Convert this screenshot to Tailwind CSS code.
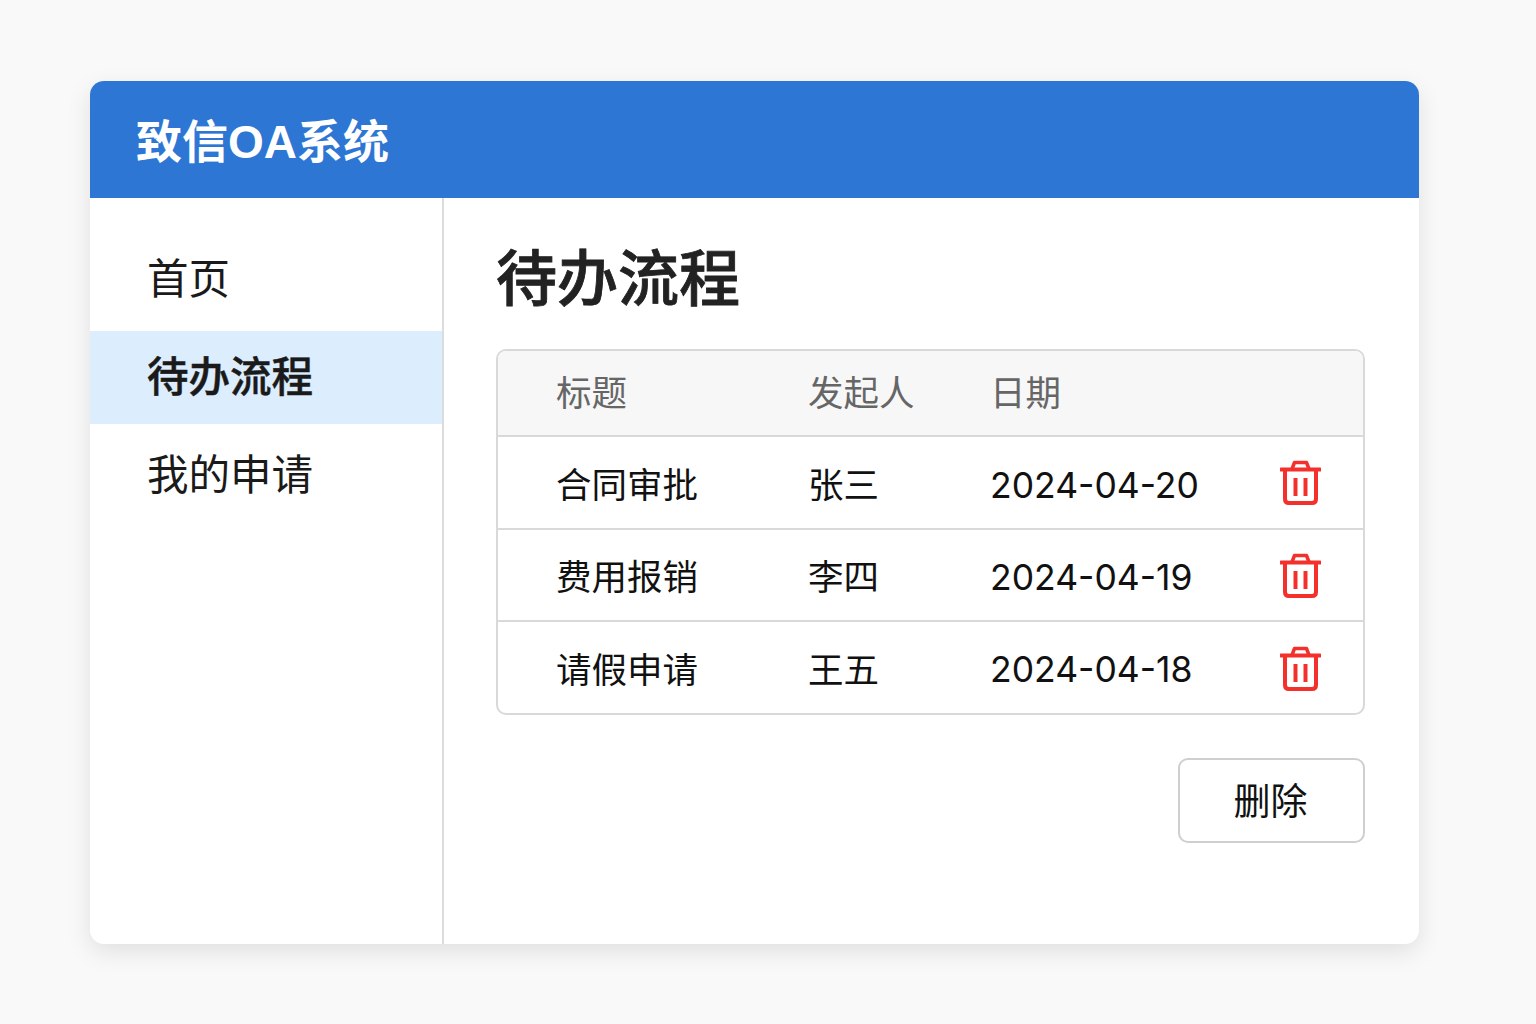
<!DOCTYPE html>
<html lang="zh-CN">
<head>
<meta charset="UTF-8" />
<title>致信OA系统</title>
<script src="https://cdn.jsdelivr.net/npm/@tailwindcss/browser@4"></script>
</head>
<body class="bg-[#f9f9fa] font-['Liberation_Sans','Noto_Sans_CJK_SC',sans-serif]">
<div class="h-[1024px] pl-[90px] pt-[81px]">
	<div class="w-[1329px] h-[863px] bg-white rounded-[14px] shadow-[0_8px_24px_rgba(0,0,0,0.10)] overflow-hidden flex flex-col">
		<header class="h-[117px] bg-[#2d76d4] flex items-center pl-[46px] pt-[4px] text-white text-[46px] leading-none font-bold">致信OA系统</header>
		<div class="flex flex-1">
			<nav class="w-[354px] border-r-2 border-[#dcdcdc] pt-[34px] text-[#1a1a1a] text-[41.500px] flex flex-col">
				<a class="h-[99px] pl-[57px] pb-[2px] flex items-center">首页</a>
				<a class="h-[93px] pl-[57px] pt-[2px] flex items-center bg-[#dcedfd] font-medium [-webkit-text-stroke:0.5px_#1a1a1a]">待办流程</a>
				<a class="h-[98px] pl-[57px] pt-[6px] flex items-center">我的申请</a>
			</nav>
			<main class="flex-1 pl-[52px] pr-[54px] pt-[40px]">
				<h1 class="text-[61px] leading-[84px] font-medium text-[#222222] [-webkit-text-stroke:0.8px_#222222]">待办流程</h1>
				<div class="mt-[27px] border-2 border-[#d9d9d9] rounded-[10px] overflow-hidden text-[35.500px] text-[#111111]">
					<div class="h-[86px] pt-[3px] bg-[#f7f7f7] border-b-2 border-[#d9d9d9] grid grid-cols-[252px_182px_290px_1fr] pl-[58px] items-center text-[#666666]">
						<span>标题</span><span>发起人</span><span>日期</span>
					</div>
					<div class="h-[92.5px] pt-[8px] border-b-2 border-[#d9d9d9] grid grid-cols-[252px_182px_290px_1fr] pl-[58px] items-center">
						<span>合同审批</span><span>张三</span><span class="font-['Inter'] text-[35.500px] -mt-[2px]">2024-04-20</span>
						<svg class="w-[41px] h-[45px] -mt-[7px]" viewBox="0 0 41 45" fill="none" stroke="#f4302c" stroke-width="4" stroke-linejoin="round"><path d="M1 9.500h39" stroke-linecap="round"/><path d="M12 9 14.500 2.500h12L29 9" stroke-width="3.500"/><path d="M5 10V39q0 4 4 4h23q4 0 4-4V10"/><path d="M15.500 18v18M25.500 18v18"/></svg>
					</div>
					<div class="h-[92.5px] pt-[8px] border-b-2 border-[#d9d9d9] grid grid-cols-[252px_182px_290px_1fr] pl-[58px] items-center">
						<span>费用报销</span><span>李四</span><span class="font-['Inter'] text-[35.500px] -mt-[2px]">2024-04-19</span>
						<svg class="w-[41px] h-[45px] -mt-[7px]" viewBox="0 0 41 45" fill="none" stroke="#f4302c" stroke-width="4" stroke-linejoin="round"><path d="M1 9.500h39" stroke-linecap="round"/><path d="M12 9 14.500 2.500h12L29 9" stroke-width="3.500"/><path d="M5 10V39q0 4 4 4h23q4 0 4-4V10"/><path d="M15.500 18v18M25.500 18v18"/></svg>
					</div>
					<div class="h-[91px] pt-[8px] grid grid-cols-[252px_182px_290px_1fr] pl-[58px] items-center">
						<span>请假申请</span><span>王五</span><span class="font-['Inter'] text-[35.500px] -mt-[4px]">2024-04-18</span>
						<svg class="w-[41px] h-[45px] -mt-[7px]" viewBox="0 0 41 45" fill="none" stroke="#f4302c" stroke-width="4" stroke-linejoin="round"><path d="M1 9.500h39" stroke-linecap="round"/><path d="M12 9 14.500 2.500h12L29 9" stroke-width="3.500"/><path d="M5 10V39q0 4 4 4h23q4 0 4-4V10"/><path d="M15.500 18v18M25.500 18v18"/></svg>
					</div>
				</div>
				<div class="mt-[43px] flex justify-end">
					<button class="w-[187px] h-[85px] pt-[4px] pr-[2px] border-2 border-[#cfcfcf] rounded-[10px] bg-white text-[37px] text-[#111111]">删除</button>
				</div>
			</main>
		</div>
	</div>
</div>
</body>
</html>
